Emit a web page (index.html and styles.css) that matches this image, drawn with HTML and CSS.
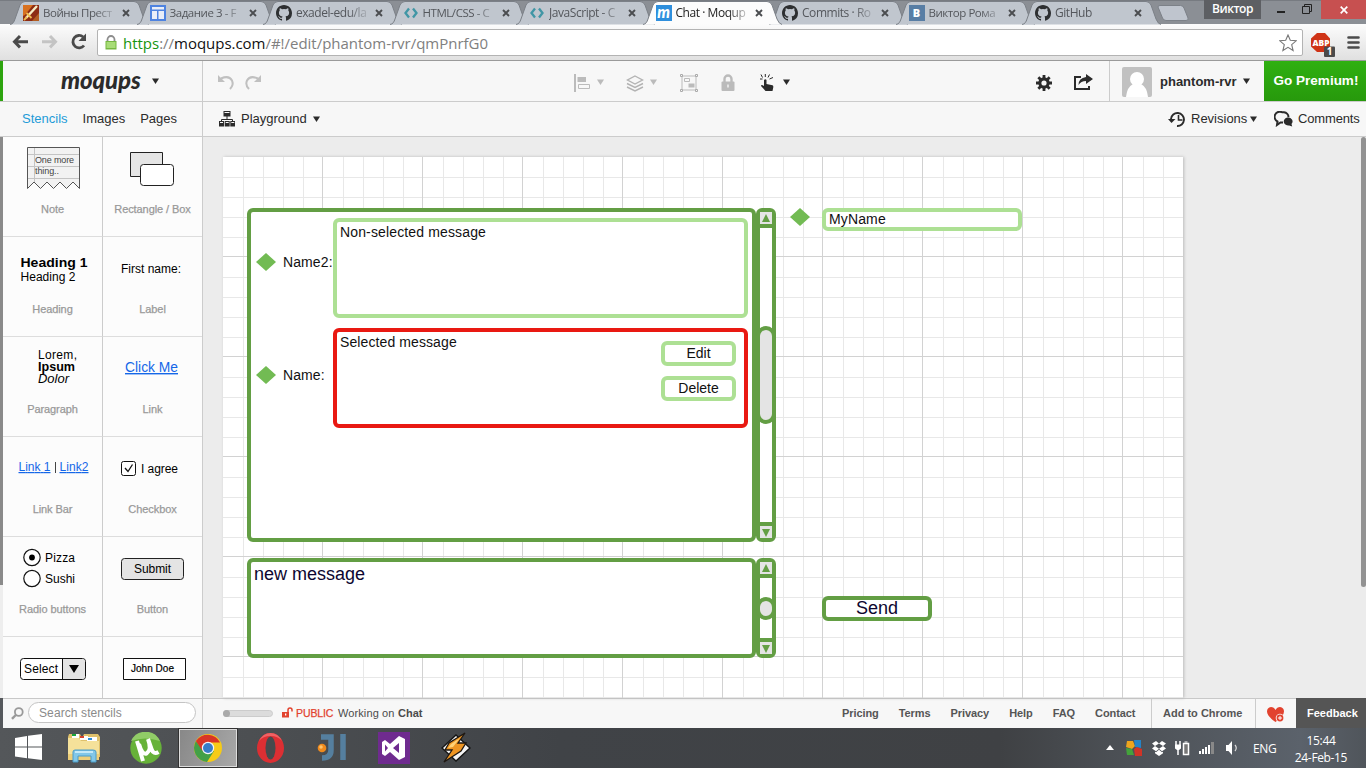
FILE: index.html
```html
<!DOCTYPE html>
<html lang="en">
<head>
<meta charset="utf-8">
<title>Chat · Moqups</title>
<link rel="stylesheet" href="styles.css">
</head>
<body>
<svg class="defs" width="0" height="0">
  <defs>
    <symbol id="tab" viewBox="0 0 140 25"><path d="M0 24.500C3 24 4 22 5 19L10 5Q11.500 1.500 15 1.500H124Q127.500 1.500 129 5L134 19Q136 24 139 24.500" stroke="#7b8087" stroke-width="1"/></symbol>
    <symbol id="x" viewBox="0 0 8 8"><path d="M1 1l6 6M7 1l-6 6" stroke="#4b4d50" stroke-width="1.900"/></symbol>
    <symbol id="github" viewBox="0 0 16 16"><path fill="#2d2f31" d="M8 0C3.580 0 0 3.580 0 8c0 3.540 2.290 6.530 5.470 7.590.4.070.55-.17.55-.38v-1.340c-2.230.48-2.700-1.070-2.700-1.070-.36-.92-.89-1.170-.89-1.170-.73-.5.060-.49.060-.49.800.060 1.220.83 1.220.83.720 1.230 1.880.87 2.340.67.070-.52.280-.87.510-1.070-1.780-.2-3.640-.89-3.640-3.950 0-.87.310-1.590.82-2.150-.08-.2-.36-1.020.080-2.120 0 0 .67-.21 2.200.82a7.600 7.600 0 014 0c1.530-1.040 2.200-.82 2.200-.82.44 1.100.16 1.920.080 2.120.51.56.82 1.270.82 2.150 0 3.070-1.870 3.750-3.650 3.950.29.25.54.73.54 1.480v2.200c0 .21.150.46.550.38A8 8 0 0016 8c0-4.420-3.580-8-8-8z"/></symbol>
    <symbol id="code" viewBox="0 0 16 16"><path d="M6 3.500L2.500 8 6 12.500M10 3.500L13.500 8 10 12.500" fill="none" stroke="#4096a5" stroke-width="2.300"/></symbol>
    <symbol id="caret" viewBox="0 0 7 6"><path d="M0 .5h7L3.500 6z"/></symbol>
  </defs>
</svg>

<div class="tabstrip">
  <div class="tab"><svg class="shape"><use href="#tab"/></svg>
    <svg class="fav" viewBox="0 0 16 16"><path fill="#8d2c14" d="M0 0h16v16H0z"/><path fill="#d8711f" d="M0 0h10L2 10l-2 1z"/><path fill="#e39b35" d="M9 16l7-8v8z" opacity=".45"/><path d="M3 13L14 1" stroke="#f6edc4" stroke-width="2.400"/><path d="M3.500 8l5 5M1 15l3-3" stroke="#f0bd4e" stroke-width="1.800"/></svg>
    <span class="title tight">Войны Прест</span><svg class="close"><use href="#x"/></svg></div>
  <div class="tab"><svg class="shape"><use href="#tab"/></svg>
    <svg class="fav" viewBox="0 0 16 16"><path fill="#4e83e0" d="M0 0h16v16H0z"/><path fill="#e9eef8" d="M2 2h12v2.500H2zM2 6h5v8H2zM8.500 6H14v8H8.500z"/></svg>
    <span class="title tight">Задание 3 - F</span><svg class="close"><use href="#x"/></svg></div>
  <div class="tab"><svg class="shape"><use href="#tab"/></svg>
    <svg class="fav"><use href="#github"/></svg><span class="title">exadel-edu/la</span><svg class="close"><use href="#x"/></svg></div>
  <div class="tab"><svg class="shape"><use href="#tab"/></svg>
    <svg class="fav"><use href="#code"/></svg><span class="title tight">HTML/CSS - C</span><svg class="close"><use href="#x"/></svg></div>
  <div class="tab"><svg class="shape"><use href="#tab"/></svg>
    <svg class="fav"><use href="#code"/></svg><span class="title">JavaScript - C</span><svg class="close"><use href="#x"/></svg></div>
  <div class="tab active"><svg class="shape"><use href="#tab"/></svg>
    <span class="fav moq">m</span><span class="title">Chat · Moqup</span><svg class="close"><use href="#x"/></svg></div>
  <div class="tab"><svg class="shape"><use href="#tab"/></svg>
    <svg class="fav"><use href="#github"/></svg><span class="title">Commits · Ro</span><svg class="close"><use href="#x"/></svg></div>
  <div class="tab"><svg class="shape"><use href="#tab"/></svg>
    <span class="fav vk">B</span><span class="title tight">Виктор Рома</span><svg class="close"><use href="#x"/></svg></div>
  <div class="tab"><svg class="shape"><use href="#tab"/></svg>
    <svg class="fav"><use href="#github"/></svg><span class="title">GitHub</span><svg class="close"><use href="#x"/></svg></div>
  <svg class="newtab" viewBox="0 0 32 16"><path d="M1 2Q1 .5 3 .5H23.500Q26 .5 27 3L31 13Q32 15.500 29 15.500H9Q6.500 15.500 5.500 13z" fill="#bfc5ce" stroke="#7c8188"/></svg>
  <div class="winctl">
    <span class="user">Виктор</span>
    <svg class="min" viewBox="0 0 8 2"><path fill="#222" d="M0 0h8v2H0z"/></svg>
    <svg class="restore" viewBox="0 0 10 10"><path d="M2.500 2.500V.5h7v7h-2M.5 2.500h7v7h-7z" fill="none" stroke="#222"/></svg>
    <span class="winclose"><svg viewBox="0 0 8 8"><path d="M.7.7l6.600 6.600M7.300.7L.7 7.300" stroke="#fff" stroke-width="1.700"/></svg></span>
  </div>
</div>

<div class="browserbar">
  <svg class="nav" viewBox="0 0 90 35"><path d="M20 12l-5.500 5.700 5.500 5.700M15.500 17.700H28" fill="none" stroke="#4a4a4a" stroke-width="3"/><path d="M50 12l5.500 5.700L50 23.400M54.500 17.700H42" fill="none" stroke="#c4c4c4" stroke-width="3"/><path d="M84 21.500a6.200 6.200 0 1 1-.8-8.500" fill="none" stroke="#4a4a4a" stroke-width="2.800"/><path d="M86 9.500v7.500h-7.500z" fill="#4a4a4a"/></svg>
  <div class="omnibox">
    <svg class="lock" viewBox="0 0 12 15"><path d="M2.500 7V4.500a3.500 3.500 0 017 0V7" fill="none" stroke="#8d8d8d" stroke-width="1.800"/><path fill="#76b741" d="M.5 6h11v8.500H.5z"/><path fill="#a8dc77" d="M1.500 7h9v6h-9z"/></svg>
    <span class="url"><i class="secure">https</i>://<b>moqups.com</b>/#!/edit/phantom-rvr/qmPnrfG0</span>
    <svg class="star" viewBox="0 0 18 18"><path d="M9 1l2.300 5.300 5.900.5-4.500 3.900 1.400 5.800L9 13.400l-5.100 3.100 1.400-5.800L.8 6.800l5.900-.5z" fill="#fff" stroke="#777" stroke-width="1.100"/></svg>
  </div>
  <svg class="abp" viewBox="0 0 26 26"><path fill="#cf3316" d="M6 0h8l5 5.500v8L14 19H6L0 13.500v-8z"/><text x="10" y="13" text-anchor="middle" font-family="Open Sans" font-weight="800" font-size="9.500" textLength="17" lengthAdjust="spacingAndGlyphs" fill="#fff">ABP</text><rect x="13" y="13.500" width="11" height="10.500" rx="1" fill="#4a4a4a"/><text x="18.500" y="22.300" text-anchor="middle" font-family="Open Sans" font-weight="700" font-size="10" fill="#fff">1</text></svg>
  <svg class="menu" viewBox="0 0 13 13"><path d="M1.500 1.500h10M1.500 6.500h10M1.500 11.500h10" stroke="#4b4b4b" stroke-width="2.600" stroke-linecap="round"/></svg>
</div>

<header class="header">
  <div class="brand"><span class="logo">moqups</span><svg class="caret"><use href="#caret"/></svg></div>
  <div class="tools">
    <svg class="history" viewBox="0 0 46 18" fill="none" stroke="#c0c0c0" stroke-width="2"><path d="M4 5.500Q12 2 15 7.500 17 12 13 16"/><path d="M41 5.500Q33 2 30 7.500 28 12 32 16"/><path fill="#c0c0c0" stroke="none" d="M1 2v7h7zM44 2v7h-7z"/></svg>
    <svg class="align" viewBox="0 0 17 18"><path fill="#bbb" d="M0 0h2v18H0zM3.500 3h8.500v5H3.500z"/><path d="M4.500 10.500h11v4h-11z" fill="none" stroke="#bbb"/></svg>
    <svg class="caret dim"><use href="#caret"/></svg>
    <svg class="layers" viewBox="0 0 18 17" fill="none" stroke="#b3b3b3" stroke-width="1.400"><path d="M9 1l7.500 4L9 9 1.500 5z"/><path d="M1 8.500l8 4 8-4M1 12l8 4 8-4"/></svg>
    <svg class="caret dim"><use href="#caret"/></svg>
    <svg class="group" viewBox="0 0 18 18"><path d="M2 2h14v14H2zM4.500 4.500h5v3h-5z" fill="none" stroke="#bbb"/><path fill="#bbb" d="M8.500 9.500h6v4h-6z"/><path fill="#f7f7f7" stroke="#aaa" d="M.5.5h2v2h-2zM15.500.5h2v2h-2zM.5 15.500h2v2h-2zM15.500 15.500h2v2h-2z"/></svg>
    <svg class="padlock" viewBox="0 0 14 18"><path d="M3.500 8V5a3.500 3.500 0 017 0v3" fill="none" stroke="#bbb" stroke-width="2.400"/><rect y="7.500" x=".5" width="13" height="9.500" rx="1" fill="#bbb"/><path fill="#f7f7f7" d="M6.300 10.500h1.400v3H6.300z"/></svg>
    <svg class="hand" viewBox="0 0 14 18"><path fill="#2b2b2b" d="M4 6q1.500-1.500 2.500 0v4l6 1.200q1 .3.800 2L12.500 17h-7L1 12q0-1.500 1.700-.8L4 12z"/><path d="M5.300 0v3M9.500.5L8 3.500M13 3.500l-3.500 1.500M1 .5l1.500 3M0 5h2.500" stroke="#2b2b2b"/></svg>
    <svg class="caret handcaret"><use href="#caret"/></svg>
    <svg class="gear" viewBox="0 0 16 16"><path d="M8 0v16M0 8h16M2.350 2.350l11.300 11.300M13.650 2.350l-11.300 11.300" stroke="#2b2b2b" stroke-width="2.800"/><circle cx="8" cy="8" r="4.200" fill="none" stroke="#2b2b2b" stroke-width="3"/><circle cx="8" cy="8" r="2.600" fill="#f7f7f7"/></svg>
    <svg class="share" viewBox="0 0 19 16"><path d="M7 3H1v12h14v-3" fill="none" stroke="#2b2b2b" stroke-width="2"/><path fill="#2b2b2b" d="M12 0l7 5-7 5V7Q7 7 4.500 11 4.500 4 12 3z"/></svg>
  </div>
  <div class="account">
    <svg class="avatar" viewBox="0 0 30 30"><rect width="30" height="30" rx="2" fill="#c1c1c1"/><circle cx="15" cy="12" r="7" fill="#fff"/><path fill="#fff" d="M4 30q1-10 7-13h8q6 3 7 13z"/></svg>
    <span class="name">phantom-rvr</span><svg class="caret"><use href="#caret"/></svg>
  </div>
  <div class="premium">Go Premium!</div>
</header>

<div class="subbar">
  <nav class="panes"><span class="on">Stencils</span><span>Images</span><span>Pages</span></nav>
  <div class="pagebar">
    <svg class="sitemap" viewBox="0 0 16 16" fill="none" stroke="#2b2b2b"><path d="M8 5v4M2.500 11V8.500h11V11"/><path fill="#2b2b2b" stroke="none" d="M4.500 0h7v5.500h-7zM0 10h5v5.500H0zM5.700 10h5v5.500h-5zM11.300 10H16v5.500h-4.700z"/><path stroke="#f7f7f7" d="M5.500 1.500h5M1 11.500h3M6.700 11.500h3M12.300 11.500h3"/></svg>
    <span class="pagename">Playground</span><svg class="caret"><use href="#caret"/></svg>
    <svg class="clock" viewBox="0 0 18 16" fill="none" stroke="#2b2b2b" stroke-width="1.900"><path d="M3 8a6.500 6.500 0 116 7"/><path d="M10.500 4v5h4" stroke-width="1.600"/><path fill="#2b2b2b" stroke="none" d="M0 8h7.500L3.500 12z"/></svg>
    <span class="revisions">Revisions</span><svg class="caret"><use href="#caret"/></svg>
    <svg class="bubbles" viewBox="0 0 19 16"><path d="M9 11.500H6.500L3 14l.5-3.500A5 5 0 018 1.200h2a5 5 0 014.500 5" fill="none" stroke="#2b2b2b" stroke-width="2"/><path fill="#2b2b2b" d="M13.500 6.500a4.500 4 0 014 6.500l.7 2.500-3-1a4.500 4 0 11-1.700-8z"/></svg>
    <span class="comments">Comments</span>
  </div>
</div>

<main class="workspace">
  <div class="leftrail"></div>
  <aside class="stencils">
    <div class="cell"><svg viewBox="0 0 99 64"><path d="M24.500 51.500V10.500h52v41l-6.500-6.500-6.500 6.500L57 45l-6.500 6.500L44 45l-6.500 6.500L31 45z" fill="#f2f2f2" stroke="#555"/><path d="M25 17.500h51M25 29.500h51M25 41.500h51M31.500 11v34" stroke="#c4c4c4"/><text x="32" y="26" font-size="9" textLength="39" fill="#444">One more</text><text x="32" y="37" font-size="9" textLength="24" fill="#444">thing..</text></svg><span>Note</span></div>
    <div class="cell"><svg viewBox="0 0 99 64"><path d="M27.500 15.500h32v24h-32z" fill="#e5e5e5" stroke="#222"/><rect x="37.500" y="27.500" width="33" height="21" rx="3" fill="#fff" stroke="#222"/></svg><span>Rectangle / Box</span></div>
    <div class="cell"><svg viewBox="0 0 99 64"><text x="17.500" y="30" font-size="13.500" font-weight="700" textLength="67" lengthAdjust="spacingAndGlyphs">Heading 1</text><text x="17.500" y="44" font-size="12" textLength="55">Heading 2</text></svg><span>Heading</span></div>
    <div class="cell"><svg viewBox="0 0 99 64"><text x="18" y="36" font-size="12" textLength="60">First name:</text></svg><span>Label</span></div>
    <div class="cell"><svg viewBox="0 0 99 64"><text x="35" y="22" font-size="12" textLength="39">Lorem,</text><text x="35" y="34" font-size="12.500" font-weight="700" textLength="37" lengthAdjust="spacingAndGlyphs">Ipsum</text><text x="35" y="46" font-size="12.500" font-style="italic" textLength="31" lengthAdjust="spacingAndGlyphs">Dolor</text></svg><span>Paragraph</span></div>
    <div class="cell"><svg viewBox="0 0 99 64"><text class="link" x="22" y="35" font-size="14" textLength="53" lengthAdjust="spacingAndGlyphs">Click Me</text></svg><span>Link</span></div>
    <div class="cell"><svg viewBox="0 0 99 64"><text class="link" x="15.500" y="34" font-size="12" textLength="32">Link 1</text><path d="M52.500 25v11" stroke="#444"/><text class="link" x="56.500" y="34" font-size="12" textLength="29">Link2</text></svg><span>Link Bar</span></div>
    <div class="cell"><svg viewBox="0 0 99 64"><rect x="18.500" y="24.500" width="14" height="14" rx="2" fill="#fff" stroke="#111"/><path d="M22 31l3 3.500 4.500-7" fill="none" stroke="#111" stroke-width="1.300"/><text x="38" y="36" font-size="12" textLength="37">I agree</text></svg><span>Checkbox</span></div>
    <div class="cell"><svg viewBox="0 0 99 64"><g fill="#fff" stroke="#111" stroke-width="1.200"><circle cx="29" cy="20.500" r="8.200"/><circle cx="29" cy="41.500" r="8.200"/></g><circle cx="29" cy="20.500" r="2.900"/><text x="42" y="25" font-size="12" textLength="30">Pizza</text><text x="42" y="46" font-size="12" textLength="30">Sushi</text></svg><span>Radio buttons</span></div>
    <div class="cell"><svg viewBox="0 0 99 64"><rect x="18.500" y="21.500" width="62" height="21" rx="3" fill="#e4e4e4" stroke="#222"/><text x="31" y="36" font-size="12" textLength="37">Submit</text></svg><span>Button</span></div>
    <div class="cell"><svg viewBox="0 0 99 64"><rect x="17.500" y="21.500" width="65" height="21" rx="3" fill="#fff" stroke="#111"/><path d="M59.500 22H79q3 0 3 3v14q0 3-3 3H59.500z" fill="#e4e4e4"/><path d="M59.500 22v20" stroke="#111"/><path d="M66 28h10l-5 8z"/><text x="21" y="36" font-size="12" textLength="34">Select</text></svg></div>
    <div class="cell"><svg viewBox="0 0 99 64"><path d="M20.500 21.500h62v21h-62z" fill="#fff" stroke="#111"/><text x="28" y="35" font-size="10" textLength="43" stroke="#000" stroke-width=".2">John Doe</text></svg></div>
  </aside>
  <section class="stage">
    <div class="artboard">
      <div class="box panel chatlog"></div>
      <div class="box scroll scroll-log"><i class="btn up"></i><i class="btn down"></i><i class="thumb"></i></div>
      <div class="box pale msg-plain">Non-selected message</div>
      <div class="box pale msg-picked">Selected message</div>
      <div class="box pale button edit">Edit</div>
      <div class="box pale button delete">Delete</div>
      <i class="gem gem-a"></i><i class="gem gem-b"></i><i class="gem gem-c"></i>
      <span class="who who-a">Name2:</span><span class="who who-b">Name:</span>
      <div class="box pale myname">MyName</div>
      <div class="box panel compose">new message</div>
      <div class="box scroll scroll-compose"><i class="btn up"></i><i class="btn down"></i><i class="thumb"></i></div>
      <div class="box panel button send">Send</div>
    </div>
    <div class="pagescroll"></div>
  </section>
</main>

<footer class="footer">
  <div class="leftrail"></div>
  <div class="search"><svg viewBox="0 0 13 13"><circle cx="7.800" cy="5" r="3.900" fill="none" stroke="#999" stroke-width="1.800"/><path d="M4.800 8L1 11.800" stroke="#999" stroke-width="2.400"/></svg><span class="field">Search stencils</span></div>
  <div class="status">
    <span class="slider"><i></i></span>
    <svg class="open" viewBox="0 0 11 11"><path fill="#e2432f" d="M0 5h7v5.500H0z"/><path d="M6 5V3a2 2 0 014 0v1.500" fill="none" stroke="#e2432f" stroke-width="1.500"/><path fill="#fff" d="M3 6.500h1.300v2H3z"/></svg>
    <span class="public">PUBLIC</span><span class="working">Working on</span><b>Chat</b>
  </div>
  <div class="links"><span>Pricing</span><span>Terms</span><span>Privacy</span><span>Help</span><span>FAQ</span><span>Contact</span></div>
  <div class="addto">Add to Chrome</div>
  <div class="heart"><svg viewBox="0 0 18 16"><path fill="#e2432f" d="M8.500 15Q0 9 0 4.500 0 .5 4 0q3 0 4.500 3Q10 0 13 0q4 .5 4 4.500Q17 9 8.500 15z"/><circle cx="13" cy="11" r="4.300" fill="#f7f7f7"/><circle cx="13" cy="11" r="3.400" fill="#e2432f"/><path d="M11 11h4M13 9v4" stroke="#fff"/></svg></div>
  <div class="feedback">Feedback</div>
</footer>

<div class="taskbar">
  <div class="app start"><svg width="27" height="26" viewBox="0 0 27 26"><path fill="#fff" d="M0 4l12-2v10.500H0zM13 1.800L27 0v12.500H13zM0 13.500h12v10.700L0 22.500zM13 13.500h14V26l-14-1.700z"/></svg></div>
  <div class="app"><svg width="34" height="32" viewBox="0 0 34 32"><path fill="#dfc16b" d="M1 5l1-3h11l1 2h2l1-2h14l2 3v20H1z"/><path fill="#fff" d="M5 2h7v4H5zM13 4h8v4h-8zM20 5h10v4H20z"/><path fill="#18a53a" d="M5 2h4v2H5z"/><path fill="#d6442d" d="M13 4h4v2h-4z"/><path fill="#2b8bd7" d="M21 6h4v2h-4z"/><path fill="#f5e19a" d="M1 6h11l2 3h18v19H1z"/><path fill="#edce78" d="M1 22h31v6H1z"/><path fill="#82c7e8" stroke="#4a9cc8" d="M6 30V20q0-2 2-2h18q3 0 3 2v10h-5v-6H11v6z"/><path fill="#c5e9f7" d="M8 19h18v2H8z"/></svg></div>
  <div class="app"><svg width="32" height="32" viewBox="0 0 32 32"><circle cx="16" cy="16" r="15.700" fill="#67b239"/><path d="M1 9a16 16 0 0129 0Q15 4 1 9z" fill="#91cc67"/><path d="M7 9l6 20M9 12q3 11 7.500 9.500Q22 18 18 7l3.500 10q2 6 7 3" fill="none" stroke="#fff" stroke-width="4"/></svg></div>
  <div class="app current"><svg width="28" height="28" viewBox="0 0 28 28"><circle cx="14" cy="14" r="14" fill="#f6cb17"/><path fill="#43a047" d="M1.900 7A14 14 0 0013 28l7-11-11-1z"/><path fill="#d93526" d="M1.900 7a14 14 0 0124.200 1.500H14L8.500 17z"/><circle cx="14" cy="14" r="6.200" fill="#f3f5f7"/><circle cx="14" cy="14" r="5" fill="#377dc8"/></svg></div>
  <div class="app"><svg width="29" height="32" viewBox="0 0 29 32"><ellipse cx="14.500" cy="16" rx="13.500" ry="15" fill="#dc2f33"/><path d="M3 9Q7 1 14.500 1T26 9q-4-5-11.500-5T3 9z" fill="#ef6264"/><ellipse cx="14.500" cy="16" rx="5" ry="11.500" fill="#474a4d"/></svg></div>
  <div class="app"><svg width="30" height="30" viewBox="0 0 30 30"><path d="M4 4h10v13q0 8-9 8" fill="none" stroke="#557f9f" stroke-width="5.500"/><path d="M26 1v26" stroke="#557f9f" stroke-width="5.500"/><circle cx="5" cy="15" r="4.300" fill="#ef8a1d"/><circle cx="4" cy="14" r="1.800" fill="#ffc36a"/></svg></div>
  <div class="app"><svg width="32" height="32" viewBox="0 0 32 32"><path fill="#6f2b8f" d="M0 0h32v32H0z"/><path fill="#fff" fill-rule="evenodd" d="M21 4l6 3v18l-6 3-9-8-5 4-3-2V10l3-2 5 4zM21 11l-6 5 6 5zM7 12.500v7l3-3.500z"/></svg></div>
  <div class="app"><svg width="30" height="32" viewBox="0 0 30 32"><path fill="#f4f4f4" stroke="#161616" stroke-width="1.500" d="M15 3l14 13-14 13L1 16z"/><path fill="#ee9522" stroke="#1d1712" stroke-width="1.300" d="M24 1L8 11 4 18l7 0-8 12 17-11 5-8h-8z"/><path fill="#ffd277" d="M19 6L10 12l-3 4 5-1z"/></svg></div>
  <div class="tray">
    <svg width="8" height="6" viewBox="0 0 8 6"><path fill="#fff" d="M4 0l4 5H0z"/></svg>
    <svg class="avg" width="16" height="16" viewBox="0 0 16 16"><path fill="#eda51e" d="M1 1h6l2 5-3 3-6-2z"/><path fill="#2584c7" d="M8 0h7v8l-6-1z"/><path fill="#44a33b" d="M0 8l6 1 2 6H1z"/><path fill="#d03427" d="M8 9l3-2 5 2v7H9z"/></svg>
    <svg class="dropbox" width="14" height="15" viewBox="0 0 14 15"><path fill="#fff" d="M4 0l3 2.500L3 5 0 2.500zM10 0l4 2.500L11 5 7 2.500zM3 5l4 2.700L4 10.300 0 7.500zM11 5l3 2.500-4 2.800-3-2.600zM7 8.800l3 2.500 1-.6v1.500L7 15l-4-2.800v-1.500l1 .6z"/></svg>
    <svg class="battery" width="15" height="15" viewBox="0 0 15 15"><path d="M1 0v4M5 0v4M3 8v6" stroke="#fff" stroke-width="1.500"/><path fill="#fff" d="M0 3.500h6v4L4 9H2L0 7.500z"/><path d="M8.500 2.500h5v11h-5z" fill="#777" stroke="#fff" stroke-width="1.500"/><path stroke="#fff" d="M9.500 1h3"/></svg>
    <svg class="signal" width="15" height="12" viewBox="0 0 15 12"><path fill="#fff" d="M0 9h2v3H0zM3 7h2v5H3zM6 5h2v7H6zM9 3h2v9H9z"/><path fill="#888" d="M12 0h3v12h-3z"/></svg>
    <svg class="sound" width="13" height="14" viewBox="0 0 13 14"><path fill="#fff" d="M0 4h2.500L6 0v14L2.500 10H0z"/><path d="M9 4q2.500 3 0 6" fill="none" stroke="#ddd" stroke-width="1.200"/></svg>
    <span class="lang">ENG</span>
    <span class="time">15:44<br>24-Feb-15</span>
  </div>
</div>
</body>
</html>
```

FILE: styles.css
```css
* { box-sizing: border-box; }
html, body { margin: 0; width: 1366px; height: 768px; overflow: hidden; }
body { display: flex; flex-direction: column; font-family: "Liberation Sans", Arial, sans-serif; font-size: 13px; color: #2b2b2b; background: #eee; }
svg { display: block; flex: none; }
i { font-style: normal; }
.defs { position: absolute; }

/* browser tabs */
.tabstrip { flex: none; height: 24px; background: #8b8f95; padding-left: 10px; display: flex; border-top: 1px solid #777b81; font-family: "Open Sans", "Noto Sans", sans-serif; font-size: 12px; }
.tab { position: relative; flex: none; width: 126.5px; height: 24px; display: flex; align-items: center; padding-left: 13px; color: #54575c; }
.shape { position: absolute; left: 0; top: -1px; width: 140px; height: 25px; fill: #c0c6ce; }
.active { z-index: 2; color: #222; }
.active .shape { fill: #fcfcfc; }
.fav { position: relative; width: 16px; height: 16px; flex: none; }
.moq { background: #2f8fdd; color: #fff; font: italic 900 16px/14px Lato, sans-serif; text-align: center; }
.vk { background: #587ea5; color: #fff; font-weight: 800; font-size: 11px; line-height: 16px; text-align: center; }
.title { position: relative; width: 74px; margin-left: 4px; white-space: nowrap; letter-spacing: -0.45px; line-height: 20px; -webkit-mask-image: linear-gradient(90deg, #000 52px, transparent 76px); mask-image: linear-gradient(90deg, #000 52px, transparent 76px); }
.title.tight { font-size: 11.5px; letter-spacing: -0.45px; }
.close { position: relative; width: 8px; height: 8px; margin-left: 5px; }
.newtab { width: 32px; height: 16px; margin: 4px 0 0 8px; }
.winctl { margin-left: auto; display: flex; align-items: flex-start; margin-top: -1px; height: 19px; }
.user { width: 57px; height: 19px; background: #5d5f63; color: #fff; font-weight: 600; line-height: 18px; text-align: center; letter-spacing: -0.5px; }
.min { width: 8px; height: 2px; margin: 11px 0 0 16px; }
.restore { width: 10px; height: 10px; margin: 4px 0 0 17px; }
.winclose { width: 45px; height: 19px; margin-left: 9px; background: #c75050; display: flex; align-items: center; justify-content: center; }
.winclose svg { width: 8px; height: 8px; }

/* browser toolbar */
.browserbar { flex: none; height: 37px; display: flex; background: linear-gradient(#fcfcfc, #e0e0e0); border-bottom: 1px solid #9a9a9a; }
.nav { width: 90px; height: 35px; }
.omnibox { width: 1206px; height: 27px; margin: 5px 0 0 7px; background: #fff; border: 1px solid #b3b3b3; border-radius: 2px; display: flex; align-items: center; padding-left: 7px; }
.lock { width: 12px; height: 15px; }
.url { margin-left: 6px; width: 1156px; font: 15px/24px "Open Sans", "Noto Sans", sans-serif; letter-spacing: -0.02px; color: #808080; }
.url b { font-weight: 400; color: #111; }
.secure { color: #16950f; }
.star { width: 18px; height: 18px; }
.abp { width: 26px; height: 26px; margin: 9px 0 0 8px; }
.menu { width: 13px; height: 13px; margin: 12px 0 0 10px; }

/* application header */
.header { flex: none; height: 41px; display: flex; background: #f7f7f7; border-bottom: 1px solid #ccc; }
.caret { width: 7px; height: 6px; fill: #2b2b2b; }
.dim { fill: #bbb; }
.brand { width: 203px; border-left: 3px solid #2da40e; border-right: 1px solid #ccc; display: flex; align-items: center; padding-left: 58px; }
.logo { width: 91px; font: italic 900 24px/28px Lato, sans-serif; letter-spacing: -0.1px; margin-top: -3px; }
.tools { width: 906px; display: flex; align-items: center; padding: 4px 0 0 14px; }
.history { width: 46px; height: 18px; margin-top: -2px; }
.align { width: 17px; height: 18px; margin-left: 311px; }
.align + .caret { margin-left: 6px; }
.tools .caret { margin-top: -3px; }
.layers { width: 18px; height: 17px; margin-left: 22px; }
.layers + .caret { margin-left: 6px; }
.group { width: 18px; height: 18px; margin-left: 23px; }
.padlock { width: 14px; height: 18px; margin-left: 23px; }
.hand { width: 14px; height: 18px; margin-left: 25px; margin-top: -1px; }
.handcaret { margin-left: 9px; }
.gear { width: 16px; height: 16px; margin-left: 246px; margin-top: -1px; }
.share { width: 19px; height: 16px; margin-left: 22px; margin-top: -2px; }
.account { width: 155px; border-left: 1px solid #ccc; display: flex; align-items: center; padding-left: 12px; font-weight: 700; }
.avatar { width: 30px; height: 30px; margin-top: 2px; }
.name { width: 83px; margin-left: 8px; white-space: nowrap; letter-spacing: 0; }
.premium { width: 102px; height: 40px; background: linear-gradient(#2fb011, #27990c); color: #fff; font-weight: 700; font-size: 13.500px; line-height: 39px; text-align: center; white-space: nowrap; padding-left: 2px; }
.subbar { flex: none; height: 35px; display: flex; background: #f7f7f7; border-bottom: 1px solid #ccc; line-height: 34px; }
.panes { width: 203px; border-right: 1px solid #ccc; padding-left: 22px; display: flex; gap: 15px; }
.on { color: #1e9bd7; }
.pagebar { flex: 1; display: flex; align-items: center; padding-left: 16px; line-height: 34px; }
.sitemap { width: 16px; height: 16px; margin-right: 6px; }
.pagename { width: 66px; }
.pagebar .caret { margin-left: 6px; }
.clock { width: 18px; height: 16px; margin-left: 848px; }
.revisions { margin-left: 5px; width: 53px; }
.bubbles { width: 19px; height: 16px; margin: 0 5px 0 17px; }
.comments { letter-spacing: -0.15px; }

/* work area */
.workspace { flex: none; height: 561px; display: flex; }
.leftrail { width: 3px; background: linear-gradient(#8a8a8a 448px, #eee 448px); }
.stencils { width: 200px; height: 561px; overflow: hidden; background: #fcfcfc; border-right: 1px solid #ccc; display: grid; grid-template-columns: 100px 99px; grid-auto-rows: 100px; }
.cell { border-bottom: 1px solid #ddd; font-size: 11px; color: #999; text-align: center; }
.cell:nth-child(odd) { border-right: 1px solid #ccc; }
.cell svg { width: 99px; height: 64px; fill: #000; }
.cell span { display: block; line-height: 17px; letter-spacing: -0.08px; -webkit-text-stroke: .25px #999; }
.cell .link { fill: #1567e8; text-decoration: underline; }
.stage { flex: 1; display: flex; background: #ececec; padding: 20px 0 0 20px; }
.artboard { position: relative; width: 960px; height: 541px; background-color: #fff; box-shadow: 1px 0 3px #bbb;
  background-image: linear-gradient(90deg, transparent 99px, #d2d2d2 99px), linear-gradient(transparent 99px, #d2d2d2 99px), linear-gradient(90deg, transparent 20px, #e8e8e8 20px 21px, transparent 21px 40px, #e8e8e8 40px 41px, transparent 41px 60px, #e8e8e8 60px 61px, transparent 61px 80px, #e8e8e8 80px 81px, transparent 81px), linear-gradient(transparent 20px, #e8e8e8 20px 21px, transparent 21px 40px, #e8e8e8 40px 41px, transparent 41px 60px, #e8e8e8 60px 61px, transparent 61px 80px, #e8e8e8 80px 81px, transparent 81px);
  background-size: 100px 100px; color: #111; font-size: 14px; }
.pagescroll { width: 5px; height: 450px; margin: -20px 0 0 178px; background: #929292; border-radius: 3px; }
.box { position: absolute; background: #fff; border: 4px solid #ade094; border-radius: 6px; padding-left: 3px; letter-spacing: .14px; line-height: 20px; white-space: nowrap; }
.panel { border-color: #639e44; }
.chatlog { left: 24px; top: 51px; width: 509px; height: 334px; }
.msg-plain { left: 110px; top: 61px; width: 415px; height: 100px; }
.msg-picked { left: 110px; top: 171px; width: 415px; height: 100px; border-color: #e91912; letter-spacing: .1px; }
.button { padding: 0; text-align: center; line-height: 17px; letter-spacing: 0; }
.edit { left: 438px; top: 184px; width: 75px; height: 25px; }
.delete { left: 438px; top: 219px; width: 75px; height: 25px; }
.myname { left: 599px; top: 51px; width: 200px; height: 23px; line-height: 15px; }
.compose { left: 24px; top: 401px; width: 509px; height: 100px; font-size: 18px; line-height: 25px; color: #0d0630; letter-spacing: 0; }
.send { left: 599px; top: 439px; width: 110px; height: 25px; font-size: 18px; line-height: 17px; color: #0d0630; }
.gem { position: absolute; width: 20px; height: 18px; background: #72bb53; clip-path: polygon(50% 0, 100% 50%, 50% 100%, 0 50%); }
.gem-a { left: 33px; top: 96px; }
.gem-b { left: 33px; top: 209px; }
.gem-c { left: 567px; top: 51px; }
.who { position: absolute; left: 60px; line-height: 20px; letter-spacing: .1px; }
.who-a { top: 95px; }
.who-b { top: 208px; }
.scroll { left: 533px; width: 20px; padding: 0; border-color: #639e44; }
.scroll-log { top: 51px; height: 334px; }
.scroll-compose { top: 401px; height: 100px; }
.btn { position: absolute; left: 0; width: 12px; height: 16px; background: #e4e4e4; }
.btn::after { content: ""; position: absolute; left: 2px; width: 8px; height: 8px; background: #639e44; }
.up { top: 0; border-bottom: 4px solid #639e44; }
.up::after { top: 2px; clip-path: polygon(50% 0, 100% 100%, 0 100%); }
.down { bottom: 0; border-top: 4px solid #639e44; }
.down::after { top: 3px; clip-path: polygon(0 0, 100% 0, 50% 100%); }
.thumb { position: absolute; left: -4px; width: 20px; background: #e4e4e4; border: 4px solid #639e44; border-radius: 10px; }
.scroll-log .thumb { top: 114px; height: 98px; }
.scroll-compose .thumb { top: 35px; height: 23px; }

/* application footer */
.footer { flex: none; height: 30px; display: flex; background: #f7f7f7; font-size: 11px; line-height: 29px; color: #4b4b4b; }
.footer > div { border-top: 1px solid #c8c8c8; white-space: nowrap; }
.footer .leftrail { background: #55585c; border: 0; }
.footer .search { width: 200px; border-right: 1px solid #ccc; display: flex; align-items: center; padding-left: 8px; }
.search svg { width: 13px; height: 13px; }
.field { width: 168px; height: 21px; margin: -2px 0 0 4px; border: 1px solid #c4c4c4; border-radius: 11px; background: #fff; padding-left: 10px; font-size: 12px; line-height: 20px; color: #8a8a8a; letter-spacing: .1px; }
.status { width: 619px; display: flex; align-items: center; padding-left: 20px; }
.slider { width: 50px; height: 7px; border-radius: 4px; background: #dcdcdc; border: 1px solid #ccc; }
.slider i { display: block; width: 7px; height: 7px; margin: -1px; border-radius: 50%; background: #aaa; }
.open { width: 11px; height: 11px; margin: -2px 0 0 9px; }
.public { width: 42px; margin-left: 3px; color: #e2432f; font-size: 10.500px; -webkit-text-stroke: .25px #e2432f; letter-spacing: -.1px; }
.working { width: 60px; letter-spacing: .1px; }
.links { width: 329px; display: flex; gap: 20px; padding-left: 20px; font-weight: 700; color: #555; letter-spacing: -0.08px; }
.addto { width: 104px; border-left: 1px solid #ccc; padding-left: 11px; font-weight: 700; color: #555; }
.heart { width: 41px; border-left: 1px solid #ccc; padding: 8px 0 0 11px; }
.heart svg { width: 18px; height: 16px; }
.footer .feedback { width: 70px; background: #555; border-color: #555; color: #fff; font-weight: 700; padding-left: 11px; }

/* taskbar */
.taskbar { flex: none; height: 40px; display: flex; background: linear-gradient(90deg, #54575a 0, #4c4f52 250px, #404347 560px, #3f4144 1000px, #4b4f54 1110px, #5b626b 1300px, #50555b); font-family: "Open Sans", "Noto Sans", sans-serif; color: #fff; font-size: 12px; }
.app { width: 62px; display: flex; align-items: center; justify-content: center; }
.start { width: 53px; padding: 0 0 2px 3px; }
.current { width: 58px; height: 38px; margin: 1px 2px; background: linear-gradient(110deg, #888, #a8a8a8); border: 1px solid #ddd; box-shadow: 0 0 0 1px #333; }
.tray { margin-left: auto; width: 260px; display: flex; align-items: center; }
.avg { margin-left: 12px; }
.dropbox { margin-left: 10px; }
.battery { margin-left: 9px; }
.signal { margin-left: 9px; }
.sound { margin-left: 12px; }
.lang { margin-left: 14px; width: 26px; letter-spacing: -0.4px; }
.time { width: 84px; text-align: center; line-height: 17px; letter-spacing: -0.35px; margin-top: 2px; }
```
